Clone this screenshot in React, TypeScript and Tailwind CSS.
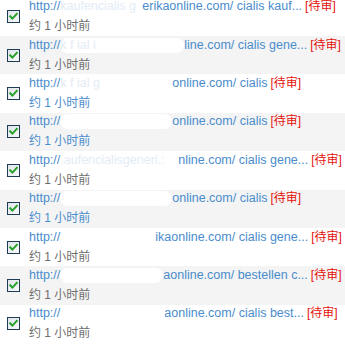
import React from "react";

type Row = {
  bg: string;
  gap: string;
  faint: string;
  tail: string;
  blue: boolean;
};

const rows: Row[] = [
  { bg: "bg-white", gap: "w-[82px]", faint: "kaufencialis g", tail: "erikaonline.com/ cialis kauf...", blue: false },
  { bg: "bg-[#f4f4f4]", gap: "w-[124px] bg-white rounded-full", faint: "k f ial i", tail: "line.com/ cialis gene...", blue: false },
  { bg: "bg-white", gap: "w-[112px]", faint: "k f ial g", tail: "online.com/ cialis", blue: true },
  { bg: "bg-[#f4f4f4]", gap: "w-[112px] bg-white rounded-full", faint: "", tail: "online.com/ cialis", blue: true },
  { bg: "bg-white", gap: "w-[118px]", faint: ".aufencialisgeneri.:", tail: "nline.com/ cialis gene...", blue: false },
  { bg: "bg-[#f4f4f4]", gap: "w-[112px] bg-white rounded-full", faint: "", tail: "online.com/ cialis", blue: true },
  { bg: "bg-white", gap: "w-[95px]", faint: "", tail: "ikaonline.com/ cialis gene...", blue: false },
  { bg: "bg-[#f4f4f4]", gap: "w-[103px] bg-white rounded-full", faint: "", tail: "aonline.com/ bestellen c...", blue: false },
  { bg: "bg-white", gap: "w-[104px]", faint: "", tail: "aonline.com/ cialis best...", blue: false },
];

function Check() {
  return (
    <svg width="13" height="13" viewBox="0 0 13 13" className="block">
      <defs>
        <linearGradient id="cbg" x1="0" y1="0" x2="1" y2="1">
          <stop offset="0" stopColor="#dfe4ea" />
          <stop offset="1" stopColor="#f8f9fa" />
        </linearGradient>
      </defs>
      <rect x="0.5" y="0.5" width="12" height="12" fill="url(#cbg)" stroke="#1f3c57" />
      <path d="M3.2 6.3 L5.4 8.6 L9.8 3.9" fill="none" stroke="#25a12a" strokeWidth="2" strokeLinecap="square" />
    </svg>
  );
}

export default function App() {
  return (
    <div
      className="w-[345px] h-[347px] overflow-hidden bg-white"
      style={{ fontFamily: '"Liberation Sans", Arial, "Noto Sans CJK SC", sans-serif' }}
    >
      <div className="-mt-[2.6px]">
        {rows.map((r, i) => (
          <div key={i} className={`${r.bg} h-[38.43px] flex items-center`}>
            <div className="w-[29px] pl-[7px] shrink-0">
              <Check />
            </div>
            <div className="flex flex-col">
              <div className="h-[17px] leading-[17px] text-[12.5px] text-[#4a8ccc] whitespace-nowrap flex">
                <span>http://</span>
                <span className={`${r.gap} h-[15px] mt-[1px] leading-[15px] overflow-hidden text-[#e3ecf6] shrink-0`}>
                  {r.faint}
                </span>
                <span>{r.tail}</span>
                <span className="ml-[3px] text-[12px] text-[#e3120b]">[待审]</span>
              </div>
              <div
                className={`mt-[3px] h-[17px] leading-[17px] text-[12px] whitespace-nowrap ${
                  r.blue ? "text-[#4a8ccc]" : "text-[#6e6e6e]"
                }`}
              >
                约 1 小时前
              </div>
            </div>
          </div>
        ))}
      </div>
    </div>
  );
}
